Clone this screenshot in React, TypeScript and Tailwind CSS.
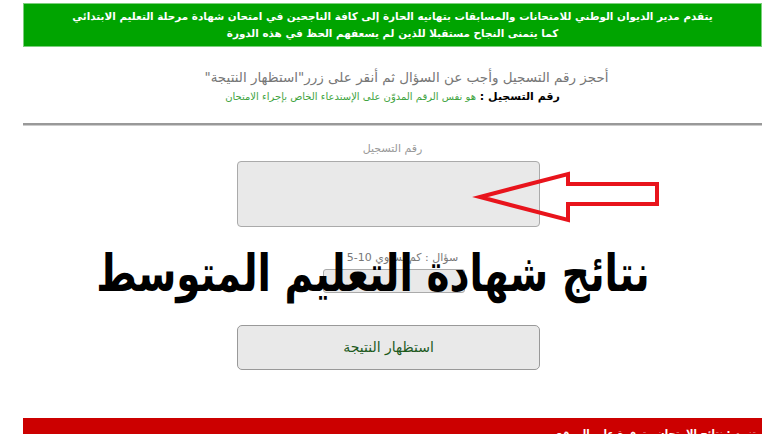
import React from "react";

export default function App() {
  return (
    <div className="relative w-[772px] h-[434px] overflow-hidden bg-white" style={{ fontFamily: '"DejaVu Sans", sans-serif' }}>
      <div dir="rtl" className="ml-[23px] w-[739px] pt-[3px] flex flex-col items-center">
        <div className="w-full h-[44px] bg-[#00a400] border border-[#7ccf7c] text-white text-[10.4px] font-bold leading-[17px] text-center pt-[4px]">
          <div>يتقدم مدير الديوان الوطني للامتحانات والمسابقات بتهانيه الحارة إلى كافة الناجحين في امتحان شهادة مرحلة التعليم الابتدائي</div>
          <div>كما يتمنى النجاح مستقبلا للذين لم يسعفهم الحظ في هذه الدورة</div>
        </div>
        <div className="mt-[22px] text-[13.5px] leading-[17px] text-[#777] pl-[28px]">
          أحجز رقم التسجيل وأجب عن السؤال ثم أنقر على زرر"استظهار النتيجة"
        </div>
        <div className="mt-[1px] leading-[16px]">
          <span className="text-[11px] font-bold text-black">رقم التسجيل : </span>
          <span className="text-[10px] text-[#3fa43f]">هو نفس الرقم المدوّن على الإستدعاء الخاص بإجراء الامتحان</span>
        </div>
        <div className="w-full mt-[18px] h-[3px] bg-[#999] border-b border-[#ccc]"></div>
        <div className="mt-[16px] text-[11px] leading-[14px] text-[#999]">رقم التسجيل</div>
        <div className="mt-[5px] w-[303px] h-[66px] bg-[#e9e9e9] border border-[#aaa] rounded-[4px] mr-[8px]"></div>
        <div className="mt-[24px] text-[11px] leading-[14px] text-[#777] ml-[20px]">سؤال : كم يساوي 10-5</div>
        <div className="mt-[4px] w-[142px] h-[24px] bg-[#e9e9e9] border border-[#aaa] rounded-[3px] mr-[-2px]"></div>
        <button className="mt-[32px] w-[303px] h-[45px] bg-[#e9e9e9] border border-[#999] rounded-[5px] text-[14px] text-[#1d5a1d] mr-[8px]" style={{ fontFamily: '"DejaVu Sans", sans-serif' }}>
          استظهار النتيجة
        </button>
        <div className="mt-[48px] w-full h-[24px] bg-[#cc0000] text-white text-[10px] font-bold leading-[14px] pt-[9px] px-[6px]">
          تنبيه : نتائج الإمتحان متوفرة على الموقع
        </div>
      </div>

      <svg className="absolute left-0 top-0" width="772" height="434" viewBox="0 0 772 434">
        <polygon
          points="480,197 568,174 568,184 657,184 657,204 568,204 568,220"
          fill="none"
          stroke="#e8141c"
          strokeWidth="4"
          strokeLinejoin="miter"
        />
      </svg>

      <div dir="rtl" className="absolute left-[95px] top-[239px] w-[556px] text-center text-black font-bold text-[39px] leading-[70px] whitespace-nowrap scale-y-[1.3]">
        نتائج شهادة التعليم المتوسط
      </div>
    </div>
  );
}
